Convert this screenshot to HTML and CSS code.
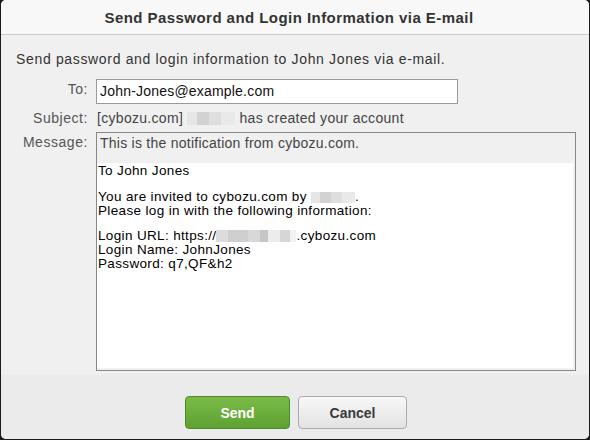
FILE: index.html
```html
<!DOCTYPE html>
<html>
<head>
<meta charset="utf-8">
<link rel="stylesheet" href="styles.css">
</head>
<body>
<div class="dialog">
  <div class="titlebar">Send Password and Login Information via E-mail</div>
  <div class="content">
    <p class="intro">Send password and login information to John Jones via e-mail.</p>
    <div class="form">
      <div class="label label-to">To:</div>
      <div class="field"><div class="input">John-Jones@example.com</div></div>
      <div class="label">Subject:</div>
      <div class="value">[cybozu.com] <span class="blur blur-name"></span> has created your account</div>
      <div class="label label-msg">Message:</div>
      <div class="message">
        <div class="msg-head">This is the notification from cybozu.com.</div>
        <div class="msg-body">
          <div class="line">To John Jones</div>
          <div class="gap"></div>
          <div class="line">You are invited to cybozu.com by <span class="blur blur-inv"></span>.</div>
          <div class="line">Please log in with the following information:</div>
          <div class="gap gap2"></div>
          <div class="line">Login URL: https://<span class="blur blur-url"></span>.cybozu.com</div>
          <div class="line">Login Name: JohnJones</div>
          <div class="line">Password: q7,QF&amp;h2</div>
        </div>
      </div>
    </div>
  </div>
  <div class="footer">
    <button class="btn btn-send">Send</button>
    <button class="btn btn-cancel">Cancel</button>
  </div>
</div>
</body>
</html>
```
FILE: styles.css
```css
html, body {
  margin: 0;
  padding: 0;
  background: #1c1c1c;
}
body {
  width: 590px;
  height: 440px;
  overflow: hidden;
  font-family: "Liberation Sans", Arial, sans-serif;
}
.dialog {
  margin-left: 1px;
  width: 588px;
  height: 439px;
  border-radius: 5px;
  background: #ececec;
  display: flex;
  flex-direction: column;
  overflow: hidden;
}
.titlebar {
  height: 35px;
  flex: none;
  box-sizing: border-box;
  background: #f8f8f8;
  border-bottom: 1px solid #c9c9c9;
  display: flex;
  align-items: center;
  justify-content: center;
  font-size: 15px;
  font-weight: bold;
  letter-spacing: 0.45px;
  color: #333;
  padding-top: 1px;
  padding-right: 12px;
}
.content {
  background: #f0f0f0;
  padding: 16px 12px 0 15px;
  height: 339px;
  box-sizing: border-box;
  flex: none;
  font-size: 14px;
  letter-spacing: 0.55px;
}
.intro {
  margin: 0 0 12px 0;
  color: #333;
  line-height: 16px;
  letter-spacing: 0.66px;
}
.form {
  display: grid;
  grid-template-columns: 72px 480px;
  column-gap: 8px;
  row-gap: 6px;
  color: #444;
}
.label {
  text-align: right;
  color: #555;
  line-height: 16px;
  white-space: nowrap;
}
.label-to { padding-top: 2px; }
.label-msg { padding-top: 2px; }
.input {
  width: 362px;
  height: 25px;
  box-sizing: border-box;
  border: 1px solid #9a9a9a;
  background: #fff;
  padding: 3px 3px;
  color: #111;
  line-height: 17px;
  letter-spacing: 0.2px;
}
.value {
  color: #444;
  line-height: 16px;
  margin-left: 1px;
  white-space: nowrap;
  letter-spacing: 0.3px;
}
.blur {
  display: inline-block;
  vertical-align: -2px;
  height: 13px;
  background:
    linear-gradient(90deg, #e6e6e6 0 20%, #d2d2d2 20% 45%, #dedede 45% 70%, #e9e9e9 70% 100%);
}
.blur-name { width: 48px; }
.blur-inv { width: 44px; height: 11px; }
.blur-url { width: 80px; height: 12px;
  background: linear-gradient(90deg, #dcdcdc 0 15%, #cfcfcf 15% 40%, #d8d8d8 40% 55%, #c6c6c6 55% 65%, #ececec 65% 80%, #d6d6d6 80% 92%, #f2f2f2 92%);
}
.message {
  height: 239px;
  box-sizing: border-box;
  border: 1px solid #888;
  background: #f0f0f0;
  padding: 0 2px 2px 0;
  display: flex;
  flex-direction: column;
}
.msg-head {
  padding: 2px 3px 0 3px;
  height: 30px;
  box-sizing: border-box;
  color: #444;
  line-height: 17px;
  white-space: nowrap;
  letter-spacing: 0.25px;
}
.msg-body {
  flex: 1;
  background: #fff;
  padding: 1px 0 0 1px;
  font-size: 13.5px;
  letter-spacing: 0.35px;
  color: #000;
  line-height: 14px;
}
.line { height: 14px; white-space: nowrap; }
.gap { height: 12px; }
.gap2 { height: 11px; }
.footer {
  flex: 1;
  background: #ebebeb;
  display: flex;
  justify-content: center;
  align-items: flex-start;
  gap: 8px;
  padding-top: 22px;
  padding-left: 2px;
}
.btn {
  height: 33px;
  border-radius: 4px;
  font-family: "Liberation Sans", Arial, sans-serif;
  font-size: 14px;
  font-weight: bold;
  padding: 0;
  cursor: pointer;
}
.btn-send {
  width: 105px;
  color: #fff;
  background: linear-gradient(#7bba48, #5ea233);
  border: 1px solid #4b8c2a;
}
.btn-cancel {
  width: 109px;
  color: #3a3a3a;
  background: linear-gradient(#f8f8f8, #e2e2e2);
  border: 1px solid #ababab;
}
```
